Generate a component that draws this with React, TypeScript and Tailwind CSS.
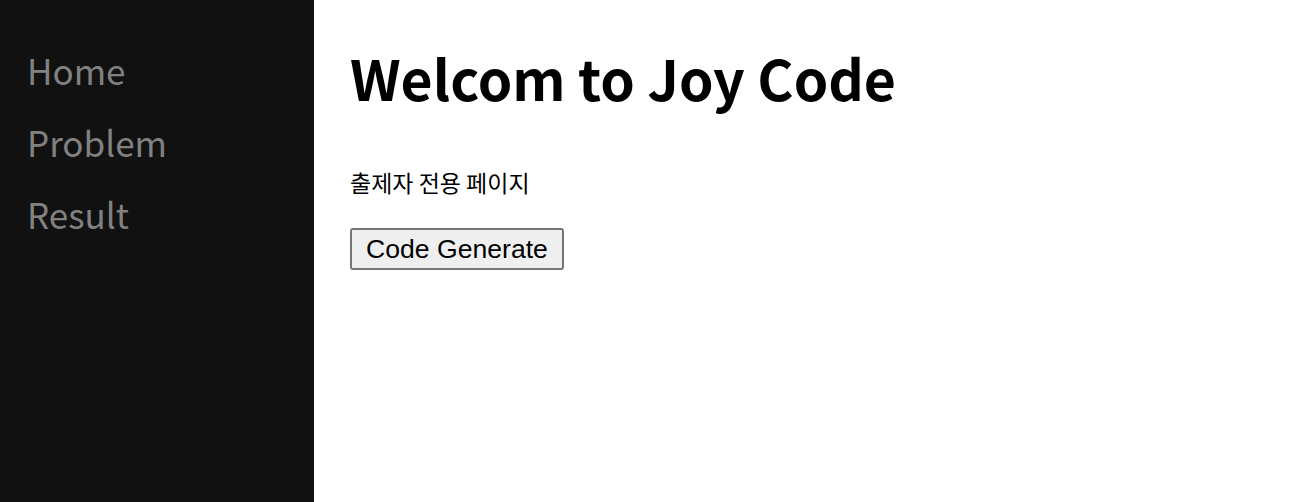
export default function App() {
  return (
    <div className="flex min-h-[502px] w-full bg-white">
      <nav className="w-[314px] shrink-0 bg-[#111111] pt-[45px] pl-[27px]">
        <ul className="flex flex-col gap-[22px] font-['Noto_Sans_CJK_KR','Noto_Sans',sans-serif] text-[35px] leading-[50px] text-[#818181]">
          <li>Home</li>
          <li>Problem</li>
          <li>Result</li>
        </ul>
      </nav>
      <main className="flex flex-col items-start pl-[36px] pt-[37px]">
        <h1 className="font-['Noto_Sans_CJK_KR','Noto_Sans',sans-serif] text-[55.3px] leading-[80px] font-semibold text-black">
          Welcom to Joy Code
        </h1>
        <p className="mt-[50px] font-['Noto_Sans_CJK_KR',sans-serif] text-[23px] leading-[30px] text-black">
          출제자 전용 페이지
        </p>
        <button className="mt-[31px] h-[42px] rounded-[3px] border-2 border-[#767676] bg-[#efefef] px-[14px] font-['Liberation_Sans',Arial,sans-serif] text-[26.6px] leading-none text-black">
          Code Generate
        </button>
      </main>
    </div>
  )
}
